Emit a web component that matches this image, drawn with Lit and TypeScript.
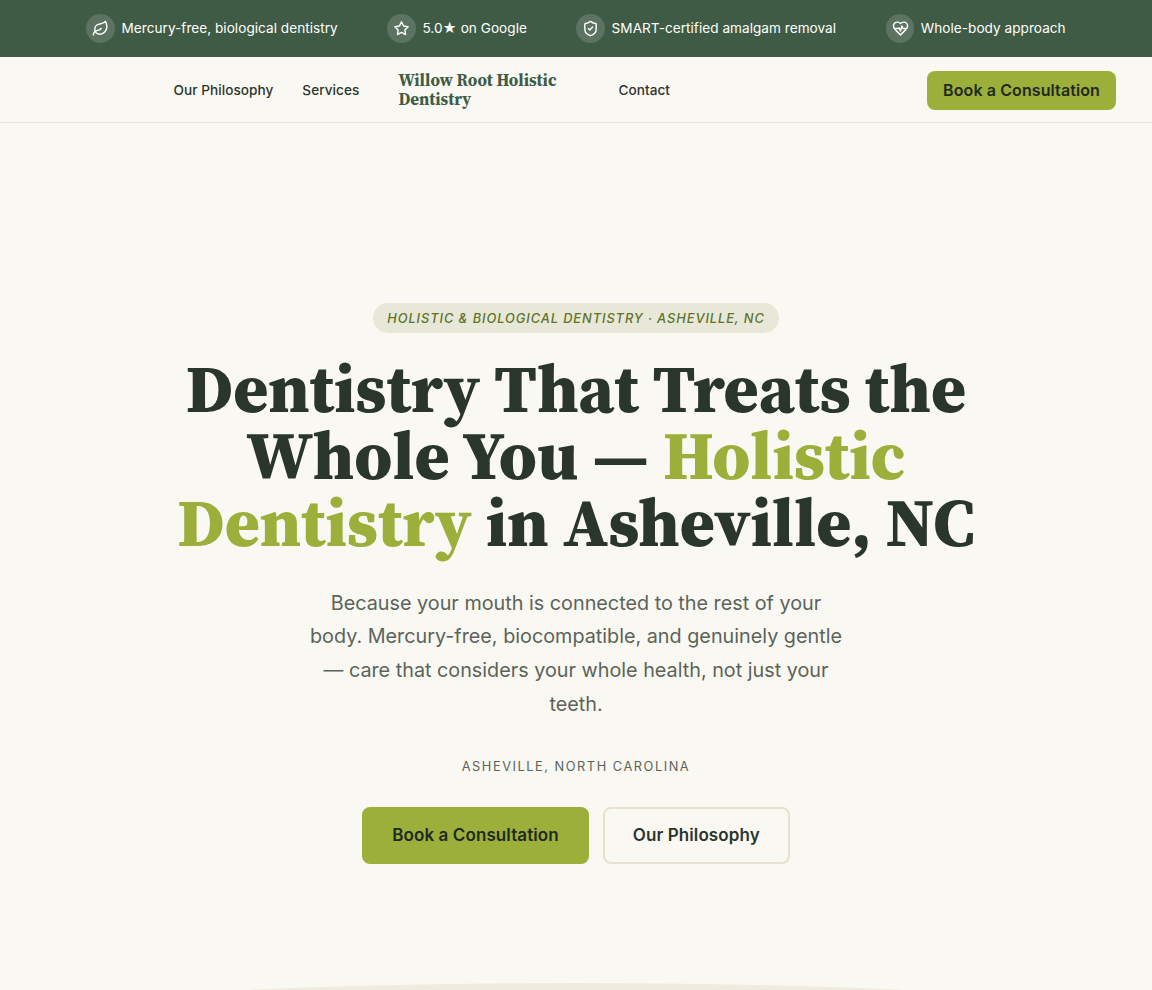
import { LitElement, html, css, svg } from "lit";
import { customElement } from "lit/decorators.js";

const icons = {
  leaf: svg`<path d="M11 20A7 7 0 0 1 9.8 6.1C15.5 5 17 4.48 19 2c1 2 2 4.18 2 8 0 5.5-4.78 10-10 10Z"/><path d="M2 21c0-3 1.85-5.36 5.08-6C9.5 14.52 12 13 13 12"/>`,
  star: svg`<path d="M12 2.6l2.9 5.9 6.5.95-4.7 4.58 1.1 6.47L12 17.45 6.2 20.5l1.1-6.47-4.7-4.58 6.5-.95z"/>`,
  shield: svg`<path d="M20 13c0 5-3.5 7.5-7.66 8.95a1 1 0 0 1-.67-.01C7.5 20.5 4 18 4 13V6a1 1 0 0 1 1-1c2 0 4.5-1.2 6.24-2.72a1.17 1.17 0 0 1 1.52 0C14.51 3.81 17 5 19 5a1 1 0 0 1 1 1z"/><path d="m9 12 2 2 4-4"/>`,
  heart: svg`<path d="M19 14c1.49-1.46 3-3.21 3-5.5A5.5 5.5 0 0 0 16.5 3c-1.76 0-3 .5-4.5 2-1.5-1.5-2.74-2-4.5-2A5.5 5.5 0 0 0 2 8.5c0 2.3 1.5 4.05 3 5.5l7 7Z"/><path d="M3.22 12H9.5l.5-1 2 4.5 2-7 1.5 3.5h5.27"/>`,
};

@customElement("app-root")
export class AppRoot extends LitElement {
  static styles = css`
    :host {
      display: block;
      height: 990px;
      overflow: hidden;
      position: relative;
      background: #faf8f3;
      color: #2a352c;
      font-family: Inter, "Liberation Sans", sans-serif;
    }

    .topbar {
      display: flex;
      justify-content: center;
      align-items: center;
      gap: 49.5px;
      height: 57px;
      background: #3f5b45;
      color: #fff;
      font-size: 13.6px;
      letter-spacing: 0.03px;
    }

    .perk {
      display: flex;
      align-items: center;
      gap: 6.4px;
    }

    .perk-icon {
      display: flex;
      align-items: center;
      justify-content: center;
      width: 28.8px;
      height: 28.8px;
      border-radius: 50%;
      background: rgba(255, 255, 255, 0.15);
    }

    .perk-icon svg {
      width: 17px;
      height: 17px;
      fill: none;
      stroke: currentColor;
      stroke-width: 2;
      stroke-linecap: round;
      stroke-linejoin: round;
    }

    .nav {
      display: flex;
      align-items: center;
      height: 65px;
      padding: 0 36px 0 173.5px;
      border-bottom: 1px solid #ebe5d8;
    }

    .nav a {
      color: #2a352c;
      text-decoration: none;
      font-size: 13.6px;
      font-weight: 500;
      letter-spacing: 0.05px;
    }

    .nav .philosophy {
      margin-right: 29px;
    }

    .logo {
      width: 180px;
      margin: 0 40px 0 39px;
      color: #3f5b45;
      font-family: "Source Serif 4", "Liberation Serif", serif;
      font-size: 16.8px;
      font-variation-settings: "opsz" 8;
      font-weight: 700;
      line-height: 19px;
    }

    .nav .cta {
      margin: 2px 0 0 auto;
      padding: 10px 16px;
      color: #1f2a1f;
      font-size: 16px;
      font-weight: 600;
      line-height: 19px;
      letter-spacing: 0.1px;
    }

    .cta {
      border-radius: 8px;
      background: #9caf3a;
      color: #1f2a1f;
    }

    .hero {
      display: flex;
      flex-direction: column;
      align-items: center;
      padding-top: 180px;
      text-align: center;
    }

    .eyebrow {
      padding: 8px 14px 6px;
      border-radius: 999px;
      background: #e8e8d8;
      color: #5f7229;
      font-size: 12.8px;
      font-style: italic;
      font-weight: 500;
      line-height: 16px;
      letter-spacing: 0.073em;
      text-transform: uppercase;
    }

    h1 {
      width: 820px;
      margin: 22px 0 0;
      font-family: "Source Serif 4", "Liberation Serif", serif;
      font-size: 67.2px;
      font-variation-settings: "opsz" 8;
      font-weight: 800;
      line-height: 67.2px;
    }

    h1 span {
      color: #9caf3a;
    }

    .lede {
      width: 540px;
      margin: 30px 0 0;
      color: #5a6459;
      font-size: 19.8px;
      line-height: 33.66px;
    }

    .place {
      margin-top: 38px;
      color: #5a6459;
      font-size: 12.8px;
      line-height: 16px;
      letter-spacing: 0.12em;
      text-transform: uppercase;
    }

    .actions {
      display: flex;
      gap: 14px;
      margin-top: 32px;
    }

    .actions a {
      box-sizing: border-box;
      display: flex;
      align-items: center;
      height: 57px;
      padding: 0 28px 2px;
      border: 2px solid transparent;
      border-radius: 8px;
      font-size: 17px;
      font-weight: 600;
      letter-spacing: 0.1px;
      text-decoration: none;
    }

    .actions .ghost {
      border-color: #e8e0d0;
      color: #2a352c;
    }

    .swell {
      position: absolute;
      left: 0;
      top: 983px;
      width: 100%;
      height: 78px;
      border-radius: 50%;
      background: #efebdf;
    }
  `;

  perk(icon: keyof typeof icons, label: string) {
    return html`<div class="perk">
      <span class="perk-icon"><svg viewBox="0 0 24 24">${icons[icon]}</svg></span>
      <span>${label}</span>
    </div>`;
  }

  render() {
    return html`
      <div class="topbar">
        ${this.perk("leaf", "Mercury-free, biological dentistry")}
        ${this.perk("star", "5.0★ on Google")}
        ${this.perk("shield", "SMART-certified amalgam removal")}
        ${this.perk("heart", "Whole-body approach")}
      </div>
      <nav class="nav">
        <a class="philosophy" href="#">Our Philosophy</a>
        <a href="#">Services</a>
        <div class="logo">Willow Root Holistic Dentistry</div>
        <a href="#">Contact</a>
        <a class="cta" href="#">Book a Consultation</a>
      </nav>
      <main class="hero">
        <div class="eyebrow">Holistic &amp; Biological Dentistry · Asheville, NC</div>
        <h1>Dentistry That Treats the Whole You — <span>Holistic Dentistry</span> in Asheville, NC</h1>
        <p class="lede">
          Because your mouth is connected to the rest of your body. Mercury-free, biocompatible, and
          genuinely gentle — care that considers your whole health, not just your teeth.
        </p>
        <div class="place">Asheville, North Carolina</div>
        <div class="actions">
          <a class="cta" href="#">Book a Consultation</a>
          <a class="ghost" href="#">Our Philosophy</a>
        </div>
      </main>
      <div class="swell"></div>
    `;
  }
}
